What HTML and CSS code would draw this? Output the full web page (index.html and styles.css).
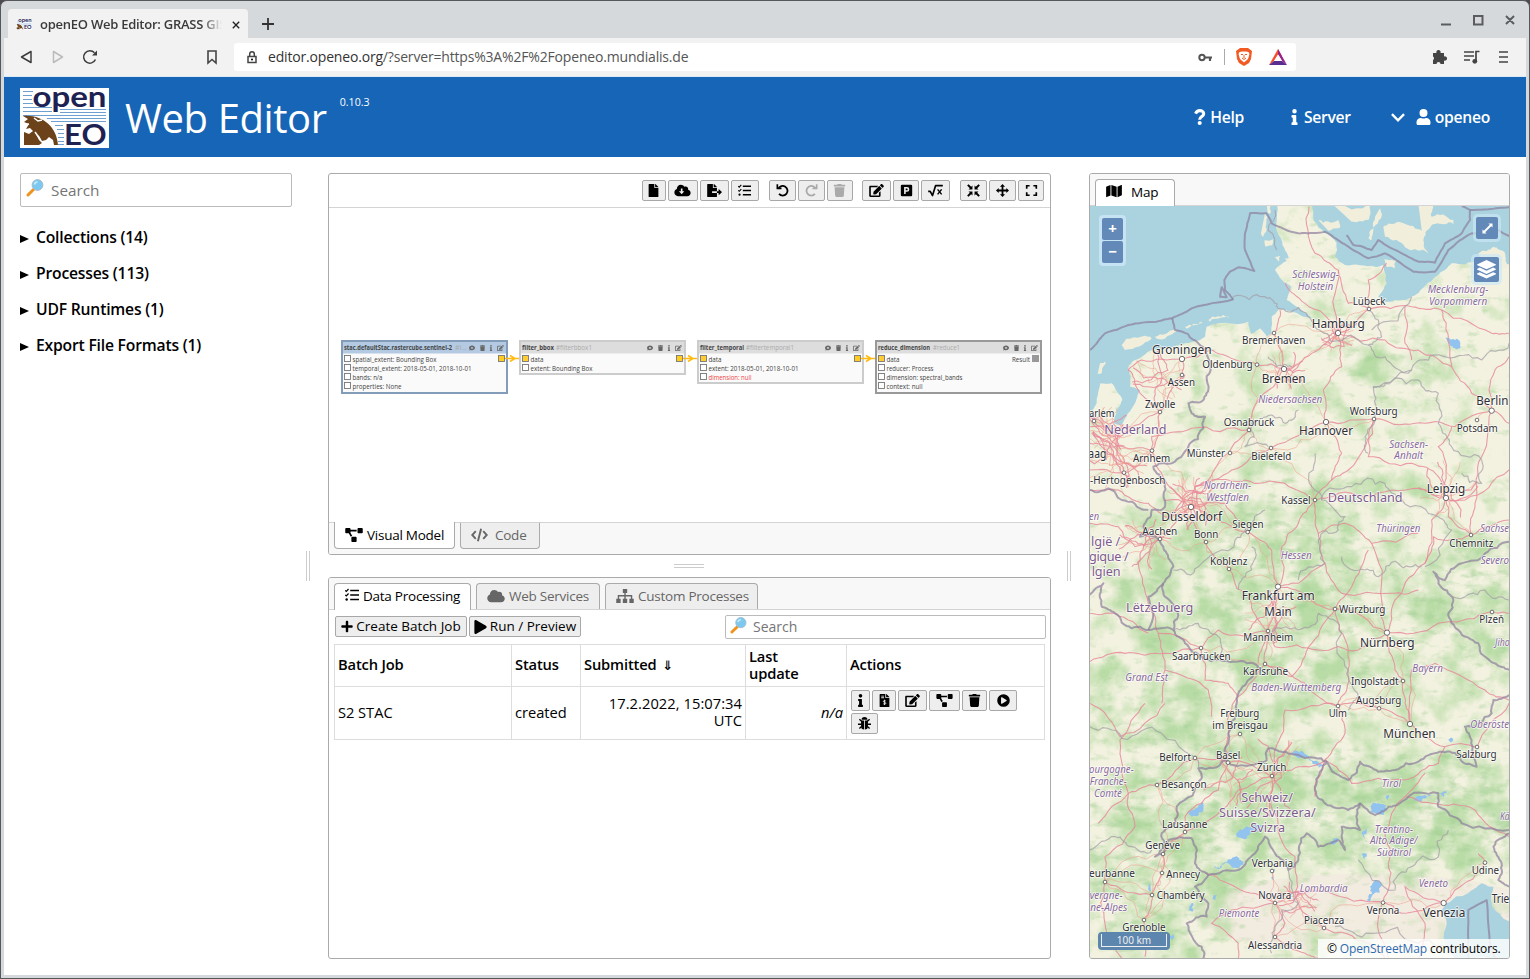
FILE: index.html
```
<!DOCTYPE html>
<html lang="en">
<head>
<meta charset="utf-8">
<title>openEO Web Editor</title>
<link rel="stylesheet" href="styles.css">
</head>
<body>
<svg class="sprite" aria-hidden="true">
  <symbol id="file" viewBox="0 0 384 512"><path d="M224 136V0H24C10.700 0 0 10.700 0 24v464c0 13.300 10.700 24 24 24h336c13.300 0 24-10.700 24-24V160H248c-13.200 0-24-10.800-24-24zm160-14.100v6.100H256V0h6.100c6.400 0 12.500 2.500 17 7l97.900 98c4.500 4.500 7 10.600 7 16.900z"/></symbol>
  <symbol id="cloud" viewBox="0 0 640 512"><path d="M537.600 226.600c4.100-10.700 6.400-22.400 6.400-34.600 0-53-43-96-96-96-19.700 0-38.100 6-53.300 16.200C367 64.200 315.300 32 256 32c-88.400 0-160 71.600-160 160 0 2.700.1 5.400.2 8.100C40.200 219.800 0 273.200 0 336c0 79.500 64.500 144 144 144h368c70.700 0 128-57.300 128-128 0-61.900-44-113.600-102.400-125.400z"/></symbol>
  <symbol id="cloud-down" viewBox="0 0 640 512"><path fill-rule="evenodd" d="M537.600 226.600c4.100-10.700 6.400-22.400 6.400-34.600 0-53-43-96-96-96-19.700 0-38.100 6-53.300 16.200C367 64.200 315.300 32 256 32c-88.400 0-160 71.600-160 160 0 2.700.1 5.400.2 8.100C40.200 219.800 0 273.200 0 336c0 79.500 64.500 144 144 144h368c70.700 0 128-57.300 128-128 0-61.900-44-113.600-102.400-125.400zM255 176h66v112h70L288 400 180 288h75z"/></symbol>
  <symbol id="export" viewBox="0 0 576 512"><path d="M384 122v6H256V0h6c6 0 12 3 17 7l98 98c4 4 7 11 7 17zM224 136V0H24C11 0 0 11 0 24v464c0 13 11 24 24 24h336c13 0 24-11 24-24V352H192v-64h192V160H248c-13 0-24-11-24-24zM571 308l-96-96c-10-10-27-3-27 11v65H384v64h64v65c0 14 17 21 27 11l96-97c6-6 6-17 0-23z"/></symbol>
  <symbol id="tasks" viewBox="0 0 512 512"><path fill="none" stroke="currentColor" stroke-width="54" d="M190 90h322M190 256h322M190 422h322"/><path fill="none" stroke="currentColor" stroke-width="44" d="M10 85l38 38L130 36M10 250l38 38 82-87"/><circle cx="60" cy="422" r="44"/></symbol>
  <symbol id="undo" viewBox="0 0 512 512"><path fill="none" stroke="currentColor" stroke-width="72" d="M90 190a190 190 0 1 1 30 200"/><path d="M20 10h66v130h130v66H20z"/></symbol>
  <symbol id="redo" viewBox="0 0 512 512"><path fill="none" stroke="currentColor" stroke-width="72" d="M422 190a190 190 0 1 0-30 200"/><path d="M492 10h-66v130H296v66h196z"/></symbol>
  <symbol id="trash" viewBox="0 0 448 512"><path d="M432 32H312l-9.400-18.700A24 24 0 0 0 281.100 0H166.800a23.700 23.700 0 0 0-21.400 13.300L136 32H16A16 16 0 0 0 0 48v32a16 16 0 0 0 16 16h416a16 16 0 0 0 16-16V48a16 16 0 0 0-16-16zM32 128l21.200 339a48 48 0 0 0 47.900 45h245.800a48 48 0 0 0 47.900-45L416 128z"/></symbol>
  <symbol id="edit" viewBox="0 0 576 512"><path d="M402.600 83.200l90.200 90.200c3.800 3.800 3.800 10 0 13.800L274.400 405.600l-92.800 10.300c-12.400 1.400-22.900-9.100-21.500-21.500l10.300-92.800L388.800 83.200c3.800-3.800 10-3.800 13.800 0zm162-22.900l-48.800-48.800c-15.200-15.200-39.900-15.200-55.200 0l-35.400 35.400c-3.800 3.800-3.800 10 0 13.800l90.200 90.200c3.800 3.800 10 3.800 13.800 0l35.400-35.400c15.200-15.300 15.200-40 0-55.200zM384 346.200V448H64V128h229.800c3.200 0 6.200-1.300 8.500-3.500l40-40c7.600-7.600 2.200-20.500-8.500-20.500H48C21.500 64 0 85.500 0 112v352c0 26.500 21.500 48 48 48h352c26.500 0 48-21.500 48-48V306.200c0-10.700-12.900-16-20.500-8.500l-40 40c-2.200 2.300-3.500 5.300-3.500 8.500z"/></symbol>
  <symbol id="param" viewBox="0 0 448 512"><path fill-rule="evenodd" d="M48 32h352a48 48 0 0 1 48 48v352a48 48 0 0 1-48 48H48a48 48 0 0 1-48-48V80a48 48 0 0 1 48-48zM130 120v272h62v-84h50a94 94 0 0 0 0-188zm62 60h44a34 34 0 0 1 0 68h-44z"/></symbol>
  <symbol id="root" viewBox="0 0 576 512"><path fill="none" stroke="currentColor" stroke-width="66" stroke-linejoin="round" d="M0 290h80l90 165L290 65h286"/><path fill="none" stroke="currentColor" stroke-width="56" d="M370 210l160 200M530 210L370 410"/></symbol>
  <symbol id="compress" viewBox="0 0 512 512"><path d="M215 215H60l50-50L5 60 60 5l105 105 50-50zM297 215V60l50 50L452 5l55 55-105 105 50 50zM297 297h155l-50 50 105 105-55 55-105-105-50 50zM215 297v155l-50-50L60 507 5 452l105-105-50-50z"/></symbol>
  <symbol id="move" viewBox="0 0 512 512"><path d="M256 0l100 105h-65v116h116v-65l105 100-105 100v-65H291v116h65L256 512 156 407h65V291H105v65L0 256l105-100v65h116V105h-65z"/></symbol>
  <symbol id="expand" viewBox="0 0 448 512"><path fill="none" stroke="currentColor" stroke-width="66" d="M35 190V68h115M298 68h115v122M413 322v122H298M150 444H35V322"/></symbol>
  <symbol id="model" viewBox="0 0 640 512"><path d="M384 320H256c-17.670 0-32 14.330-32 32v128c0 17.670 14.330 32 32 32h128c17.670 0 32-14.330 32-32V352c0-17.670-14.330-32-32-32zM192 32c0-17.670-14.330-32-32-32H32C14.330 0 0 14.330 0 32v128c0 17.670 14.330 32 32 32h95.720l73.160 128.040C211.980 300.980 232.400 288 256 288h.28L192 175.510V128h224V64H192V32zM608 0H480c-17.670 0-32 14.330-32 32v128c0 17.670 14.330 32 32 32h128c17.670 0 32-14.330 32-32V32c0-17.670-14.330-32-32-32z"/></symbol>
  <symbol id="code" viewBox="0 0 640 512"><path fill="none" stroke="currentColor" stroke-width="72" d="M180 110L45 256l135 146M460 110l135 146-135 146M380 20L260 492"/></symbol>
  <symbol id="sitemap" viewBox="0 0 640 512"><path d="M240 0h160v144H240zM0 352h160v160H0zM240 352h160v160H240zM480 352h160v160H480z"/><path fill="none" stroke="currentColor" stroke-width="50" d="M320 110v260M80 370V246h480v124"/></symbol>
  <symbol id="plus" viewBox="0 0 448 512"><path d="M416 208H272V64c0-17.670-14.330-32-32-32h-32c-17.670 0-32 14.330-32 32v144H32c-17.670 0-32 14.330-32 32v32c0 17.670 14.330 32 32 32h144v144c0 17.670 14.330 32 32 32h32c17.670 0 32-14.330 32-32V304h144c17.670 0 32-14.330 32-32v-32c0-17.670-14.330-32-32-32z"/></symbol>
  <symbol id="play" viewBox="0 0 448 512"><path d="M424.400 214.700L72.400 6.600C43.800-10.300 0 6.100 0 47.900V464c0 37.500 40.700 60.100 72.400 41.300l352-208c31.400-18.500 31.500-64.100 0-82.600z"/></symbol>
  <symbol id="info" viewBox="0 0 192 512"><path d="M20 424.200h20V279.800H20c-11 0-20-9-20-20V212c0-11 9-20 20-20h112c11 0 20 9 20 20v212.200h20c11 0 20 9 20 20V492c0 11-9 20-20 20H20c-11 0-20-9-20-20v-47.800c0-11 9-20 20-20zM96 0a72 72 0 1 0 0 144A72 72 0 0 0 96 0z"/></symbol>
  <symbol id="invoice" viewBox="0 0 384 512"><path fill-rule="evenodd" d="M224 136V0H24C11 0 0 11 0 24v464c0 13 11 24 24 24h336c13 0 24-11 24-24V160H248c-13 0-24-11-24-24zM64 64h110v34H64zM64 130h110v34H64zM256 0v128h128v-6c0-6-3-13-7-17L279 7c-5-4-11-7-17-7z"/><path fill="none" stroke="#eee" stroke-width="34" d="M240 275c-30-22-92-20-92 18 0 46 96 24 96 74 0 40-70 42-100 16M193 225v210"/></symbol>
  <symbol id="run" viewBox="0 0 512 512"><path fill-rule="evenodd" d="M256 8a248 248 0 1 0 0 496 248 248 0 0 0 0-496zm115.700 272l-176 101c-15.800 8.800-35.700-2.500-35.700-21V152c0-18.400 19.800-29.800 35.700-21l176 107c16.400 9.200 16.400 32.900 0 42z"/></symbol>
  <symbol id="bug" viewBox="0 0 512 512"><path d="M140 110a116 106 0 0 1 232 0zM120 140h120v350a120 120 0 0 1-120-120zM272 140h120v230a120 120 0 0 1-120 120z"/><path fill="none" stroke="currentColor" stroke-width="52" d="M150 180L55 90M362 180l95-90M0 285h130M382 285h130M140 370L55 455M372 370l85 85"/></symbol>
  <symbol id="user" viewBox="0 0 448 512"><path d="M224 256a128 128 0 1 0 0-256 128 128 0 0 0 0 256zm89.600 32h-16.700a174 174 0 0 1-145.800 0h-16.700C60.200 288 0 348.200 0 422.400V464c0 26.500 21.500 48 48 48h352c26.500 0 48-21.500 48-48v-41.600c0-74.200-60.200-134.400-134.400-134.400z"/></symbol>
  <symbol id="question" viewBox="0 0 384 512"><path fill="none" stroke="currentColor" stroke-width="98" d="M50 150c30-70 75-98 133-98 70 0 128 40 128 96 0 96-132 86-132 196"/><circle cx="182" cy="446" r="66"/></symbol>
  <symbol id="chevron" viewBox="0 0 448 512"><path fill="none" stroke="currentColor" stroke-width="76" d="M30 165l194 194 194-194"/></symbol>
  <symbol id="map" viewBox="0 0 576 512"><path d="M0 117.700V464c0 11.300 11.400 19 21.900 14.900L160 416V32L20.100 88A32 32 0 0 0 0 117.700zM192 416l192 64V96L192 32v384zM554 33.200L416 96v384l139.900-56a32 32 0 0 0 20.100-29.700V48c0-11.300-11.400-19-22-14.800z"/></symbol>
  <symbol id="layers" viewBox="0 0 512 512"><path d="M256 0l244 112q24 15 0 30L256 252 12 142q-24-15 0-30zM75 205l181 82 181-82 63 29q24 15 0 30L256 374 12 264q-24-15 0-30zM75 330l181 82 181-82 63 29q24 15 0 30L256 500 12 389q-24-15 0-30z"/></symbol>
  <symbol id="comment" viewBox="0 0 512 512"><path fill-rule="evenodd" d="M256 40C115 40 0 130 0 245c0 50 22 95 58 130-15 50-55 92-56 93 60 3 110-25 140-45 35 14 73 22 114 22 141 0 256-90 256-200S397 40 256 40zM215 160h82v60h60v60h-60v60h-82v-60h-60v-60h60z"/></symbol>
  <symbol id="lens" viewBox="0 0 18 18"><path stroke="#f0931e" stroke-width="3" stroke-linecap="round" d="M2 16l5.500-5.500"/><circle cx="11.500" cy="6" r="5.400" fill="#7cc8f0" stroke="#a3bccb" stroke-width="1"/><path fill="none" stroke="#c9ebfb" stroke-width="1.600" d="M8.500 5.500a3 3 0 0 1 3-2.500"/></symbol>
  <symbol id="logo" viewBox="0 0 89 60"><path fill="#fff" d="M0 0h89v60H0z"/><path fill="none" stroke="#6d9fd1" stroke-width="1" d="M3 3.500h10M3 7.500h9M3 11.500h9M3 15.500h10M3 19.500h29M3 23.500h29M40 21.500h46M40 24.500h46M3 27.500h83M27 30.500h59M31 33.500h55M35 37.500h8M37 41.500h7M38 45.500h6M38 49.500h6M38 53.500h6M38 56.500h6"/><path fill="#6b4219" d="M3 28c19-2 34 11 35 29h-4l-1-5-4-3-3 3-4 1-3-5-3-2 3 6 3 3-3 2H4V44l5 2 4-3-3-3-4 1 3-5-5-2 4-3z"/><path fill="none" stroke="#fff" stroke-width="1.500" d="M4 37l5-1M14 30l4 3 4-1M15 44l5 7"/><g fill="#1d2252" font-family="Lato" font-weight="700"><text x="12.500" y="18.500" font-size="28" textLength="74" lengthAdjust="spacingAndGlyphs">open</text><text x="44" y="56.500" font-size="28.500" textLength="42.500" lengthAdjust="spacingAndGlyphs">EO</text></g></symbol>
</svg>

<div class="window">
  <header class="titlebar">
    <div class="browser-tab"><svg class="favicon"><use href="#logo"/></svg><span class="tab-title">openEO Web Editor: GRASS GIS</span><svg class="tab-close" viewBox="0 0 10 10"><path d="M1 1l8 8M9 1L1 9"/></svg></div>
    <svg class="new-tab" viewBox="0 0 12 12"><path d="M6 0v12M0 6h12"/></svg>
    <svg class="win-buttons" viewBox="0 0 76 14"><path d="M1 11.500h10M34 3h8.500v8.500H34zM66 3l8 8M74 3l-8 8"/></svg>
  </header>
  <nav class="browser-bar">
    <svg class="nav-icons" viewBox="0 0 90 18"><path d="M12 3.500v11L2.500 9z"/><path class="dim" d="M34.500 3.500v11L43.500 9z"/><path d="M75.500 4.800A6.200 6.200 0 1 0 76.500 11.500"/><path class="solid" d="M78 2.500v5h-5z"/></svg>
    <svg class="bookmark" viewBox="0 0 10 14"><path d="M1 1h8v12L5 9.500 1 13z"/></svg>
    <div class="address">
      <svg class="lock" viewBox="0 0 10 13"><path fill="none" stroke="#444" stroke-width="1.500" d="M1 5.500h8v6H1zM2.700 5V3a2.300 2.300 0 0 1 4.600 0v2"/><circle cx="5" cy="8.500" r="1"/></svg>
      <span class="url"><b>editor.openeo.org</b>/?server=https%3A%2F%2Fopeneo.mundialis.de</span>
      <svg class="key" viewBox="0 0 15 9"><circle cx="4" cy="4.500" r="2.700" fill="none" stroke="#555" stroke-width="2"/><path stroke="#555" stroke-width="2.200" d="M6.500 4.500H14M12 5v3"/></svg>
      <i class="rule"></i>
      <svg class="brave" viewBox="0 0 16 18"><path fill="#f15a22" d="M4 0h8l4 3-1 8-2 4-5 3-5-3-2-4-1-8z"/><path fill="#fff" d="M3.500 4L6 3.500h4l2.500.5 1 2-1.500 5-4 3.500L4 11 2.500 6z"/><path fill="none" stroke="#f15a22" d="M5 6.500h2M9 6.500h2M8 7v3M6 10l2 1.500 2-1.500"/></svg>
      <svg class="bat" viewBox="0 0 18 16"><path fill="#f4512c" d="M9 0l4 7-4-1-4 6-5 4z"/><path fill="#96228a" d="M9 0l9 16-5-4-4-7z"/><path fill="#5a2d91" d="M0 16l5-4h8l5 4z"/><path fill="#fff" d="M9 5.500l4 6.500H5z"/></svg>
    </div>
    <svg class="ext-icons" viewBox="0 0 78 18"><path fill="#444" d="M1 5h3.500a2.200 2.200 0 1 1 4 0H12v3.500a2.200 2.200 0 1 1 0 4V16H8.500a2 2 0 0 0-4 0H1v-4a2 2 0 0 0 0-3.500z"/><path fill="none" stroke="#444" stroke-width="1.700" d="M32 4h10M32 8h10M32 12h6M44 13V3.500h3.500"/><circle cx="42.800" cy="13.300" r="2.400" fill="#444"/><path stroke="#444" stroke-width="1.700" d="M67 4h9M67 9h9M67 14h9"/></svg>
  </nav>

  <header class="app-header">
    <svg class="logo"><use href="#logo"/></svg>
    <h1>Web Editor</h1><sup>0.10.3</sup>
    <div class="menu">
      <a><svg class="i12"><use href="#question"/></svg>Help</a>
      <a class="m-server"><svg class="i6"><use href="#info"/></svg>Server</a>
      <a class="m-user"><svg class="i14"><use href="#chevron"/></svg><svg class="i15"><use href="#user"/></svg>openeo</a>
    </div>
  </header>

  <main>
    <aside class="discovery">
      <div class="search big"><svg class="lens"><use href="#lens"/></svg>Search</div>
      <div class="entry">Collections (14)</div>
      <div class="entry">Processes (113)</div>
      <div class="entry">UDF Runtimes (1)</div>
      <div class="entry">Export File Formats (1)</div>
    </aside>
    <div class="splitter"><i></i></div>
    <div class="center">
      <section class="panel editor">
        <div class="tools">
          <div><button class="w24"><svg><use href="#file"/></svg></button><button class="w30"><svg><use href="#cloud-down"/></svg></button><button class="w29"><svg><use href="#export"/></svg></button><button class="w28"><svg><use href="#tasks"/></svg></button></div>
          <div><button class="w27"><svg><use href="#undo"/></svg></button><button class="w27 off"><svg><use href="#redo"/></svg></button><button class="w26 off"><svg><use href="#trash"/></svg></button></div>
          <div><button class="w29"><svg><use href="#edit"/></svg></button><button class="w26"><svg><use href="#param"/></svg></button><button class="w29"><svg><use href="#root"/></svg></button></div>
          <div><button class="w27"><svg><use href="#compress"/></svg></button><button class="w27"><svg><use href="#move"/></svg></button><button class="w26"><svg><use href="#expand"/></svg></button></div>
        </div>
        <svg class="graph" id="graph" viewBox="329 208 721 313"></svg>
        <div class="tabs bottom">
          <span class="tab active t-model"><svg class="i18"><use href="#model"/></svg>Visual Model</span><span class="tab t-code"><svg class="i17"><use href="#code"/></svg>Code</span>
        </div>
      </section>
      <div class="hsplitter"><i></i></div>
      <section class="panel jobs">
        <div class="tabs top">
          <span class="tab active t-data"><svg class="i14"><use href="#tasks"/></svg>Data Processing</span><span class="tab t-web"><svg class="i18"><use href="#cloud"/></svg>Web Services</span><span class="tab t-custom"><svg class="i18"><use href="#sitemap"/></svg>Custom Processes</span>
        </div>
        <div class="job-actions">
          <button class="text b-create"><svg class="i12"><use href="#plus"/></svg>Create Batch Job</button><button class="text b-run"><svg class="i13"><use href="#play"/></svg>Run / Preview</button>
          <div class="search small"><svg class="lens"><use href="#lens"/></svg>Search</div>
        </div>
        <table>
          <tr><th class="c1">Batch Job</th><th class="c2">Status</th><th class="c3">Submitted <span class="sort">⇓</span></th><th class="c4">Last<br>update</th><th class="c5">Actions</th></tr>
          <tr><td>S2 STAC</td><td>created</td><td class="r">17.2.2022, 15:07:34 UTC</td><td class="r"><em>n/a</em></td>
          <td class="acts"><div><button class="w20"><svg><use href="#info"/></svg></button><button class="w24"><svg><use href="#invoice"/></svg></button><button class="w29"><svg><use href="#edit"/></svg></button><button class="w31"><svg><use href="#model"/></svg></button><button class="w25"><svg><use href="#trash"/></svg></button><button class="w28"><svg><use href="#run"/></svg></button><button class="w27"><svg><use href="#bug"/></svg></button></div></td></tr>
        </table>
      </section>
    </div>
    <div class="splitter second"><i></i></div>
    <section class="panel viewer">
      <div class="tabs top"><span class="tab active t-map"><svg class="i16"><use href="#map"/></svg>Map</span></div>
      <div class="map">
        <svg id="map-svg" viewBox="15 108 1257 2256" preserveAspectRatio="none">
          <defs>
            <filter id="wood" x="0" y="0" width="1" height="1" color-interpolation-filters="sRGB"><feTurbulence type="fractalNoise" baseFrequency=".011" numOctaves="6" seed="8"/><feColorMatrix values="0 0 0 0 0  0 0 0 0 0  0 0 0 0 0  1 0 0 0 0" result="n"/><feComposite in="n" in2="SourceAlpha" operator="arithmetic" k2="2.600" k3=".8" k4="-1.500" result="m"/><feFlood flood-color="#b9dca6"/><feComposite in2="m" operator="in"/></filter>
            <filter id="relief" x="0" y="0" width="1" height="1" color-interpolation-filters="sRGB"><feTurbulence type="fractalNoise" baseFrequency=".022 .04" numOctaves="5" seed="3"/><feColorMatrix values="0 0 0 0 0  0 0 0 0 0  0 0 0 0 0  0 1 0 0 0" result="n"/><feComposite in="n" in2="SourceAlpha" operator="arithmetic" k2="3" k3=".6" k4="-1.850" result="m"/><feFlood flood-color="#9fce92"/><feComposite in2="m" operator="in"/></filter>
            <radialGradient id="g"><stop offset="0" stop-color="#000"/><stop offset=".6" stop-color="#000" stop-opacity=".7"/><stop offset="1" stop-color="#000" stop-opacity="0"/></radialGradient>
          </defs>
          <rect x="15" y="108" width="1257" height="2256" fill="#f3f2e0"/>
          <ellipse cx="850" cy="2230" rx="520" ry="120" fill="#f2ebdf"/>
          <g filter="url(#wood)"><rect x="15" y="108" width="1257" height="2256" fill="none"/><g id="density" fill="url(#g)"></g></g>
          <g filter="url(#relief)" opacity=".55"><rect x="15" y="108" width="1257" height="2256" fill="none"/><g id="hills" fill="url(#g)"></g></g>
          <g id="water"></g><g id="roads"></g><g id="borders"></g><g id="labels"></g>
        </svg>
        <div class="zoom"><b>+</b><b>−</b></div>
        <div class="ctl full"><svg viewBox="0 0 12 12"><path d="M7 .5h4.500V5L10 3.500 3.500 10 5 11.500H.5V7L2 8.500 8.500 2z"/></svg></div>
        <div class="ctl layer"><svg><use href="#layers"/></svg></div>
        <div class="scale"><span>100 km</span></div>
        <div class="attribution">© <a>OpenStreetMap</a> contributors.</div>
      </div>
    </section>
  </main>
</div>
<script src="map.js"></script>
</body>
</html>
```
FILE: styles.css
```
* { box-sizing: border-box; }
body { margin: 0; font: 15px/17px "Open Sans", "Noto Sans", sans-serif; color: #000; background: #4b4b50; }
svg { fill: currentColor; overflow: visible; flex: none; }
.sprite { position: absolute; width: 0; height: 0; overflow: hidden; }
.window { width: 1530px; height: 979px; border: 1px solid #55575b; border-radius: 7px 7px 0 0; background: #d6d9dc; padding: 0 3px 3px; display: grid; grid-template-rows: 37px 39px 80px 1fr; overflow: hidden; }

.titlebar { display: flex; align-items: flex-start; }
.browser-tab { margin: 8px 0 0 4px; width: 240px; height: 29px; background: #f2f2f2; border-radius: 4px 4px 0 0; display: flex; align-items: center; padding: 2px 8px 0; }
.favicon { width: 16px; height: 15px; margin-right: 8px; }
.tab-title { width: 182px; overflow: hidden; white-space: nowrap; font-size: 13px; font-weight: 600; letter-spacing: -.25px; color: #3a3a3a; -webkit-mask-image: linear-gradient(90deg, #000 162px, transparent 182px); mask-image: linear-gradient(90deg, #000 162px, transparent 182px); }
.tab-close { width: 8px; height: 8px; margin-left: 10px; fill: none; stroke: #222; stroke-width: 1.7; }
.new-tab { width: 12px; height: 12px; margin: 17px 0 0 14px; fill: none; stroke: #333; stroke-width: 1.8; }
.win-buttons { width: 76px; height: 14px; margin: 12px 10px 0 auto; fill: none; stroke: #5a5c5e; stroke-width: 2; }

.browser-bar { background: #f2f2f2; display: flex; align-items: center; border-bottom: 1px solid #dcecf5; padding-left: 15px; }
.nav-icons { width: 90px; height: 18px; fill: none; stroke: #3c3c3c; stroke-width: 1.5; stroke-linejoin: round; }
.nav-icons .dim { stroke: #bbb; }
.nav-icons .solid { fill: #3c3c3c; stroke: none; }
.bookmark { width: 10px; height: 14px; margin-left: 98px; fill: none; stroke: #444; stroke-width: 1.6; }
.address { margin-left: 17px; width: 1062px; height: 28px; border-radius: 3px; background: #fff; display: flex; align-items: center; padding: 0 9px 0 13px; }
.lock { width: 10px; height: 13px; }
.url { margin: -2px 0 0 11px; font-size: 14px; letter-spacing: -.18px; color: #555; }
.url b { font-weight: 400; color: #333; }
.key { width: 15px; height: 9px; margin-left: auto; }
.rule { width: 1px; height: 16px; background: #aaa; margin: 0 11px 0 11px; }
.brave { width: 16px; height: 18px; }
.bat { width: 18px; height: 16px; margin-left: 17px; }
.ext-icons { width: 78px; height: 18px; margin-left: 136px; }

.app-header { background: #1665b6; color: #fff; display: flex; padding: 0 36px 0 16px; }
.logo { width: 89px; height: 60px; margin-top: 11px; }
h1 { margin: 14px 0 0 16px; font-size: 40px; line-height: 54px; font-weight: 400; letter-spacing: -.4px; white-space: nowrap; }
sup { font-size: 10.600px; line-height: 14px; margin: 18px 0 0 13px; }
.menu { margin-left: auto; display: flex; align-items: center; font-size: 15.700px; font-weight: 600; letter-spacing: -.3px; }
.menu a { display: flex; align-items: center; }
.menu svg { height: 16px; margin-right: 4px; }
.m-server { margin-left: 47px; }
.menu .i6 { width: 7px; margin-right: 6px; }
.m-user { margin-left: 40px; }
.menu .i14 { margin-right: 11px; }
.i12 { width: 12px; } .i13 { width: 13px; } .i14 { width: 14px; } .i15 { width: 15px; } .i16 { width: 16px; } .i17 { width: 17px; } .i18 { width: 18px; }

main { background: #fff; padding: 16px 16px 16px; display: grid; grid-template-columns: 272px 36px 723px 38px 421px; min-height: 0; }
.search { border: 1px solid #bbb; border-radius: 2px; background: #fff; color: #757575; display: flex; }
.search.big { height: 34px; font-size: 15.300px; line-height: 33px; padding-left: 5px; margin-bottom: 18px; }
.lens { width: 18px; height: 18px; margin: 5px 7px 0 0; }
.entry { height: 36px; line-height: 25px; font-weight: 600; font-size: 15.700px; letter-spacing: -.2px; display: flex; align-items: flex-start; }
.entry::before { content: ""; border: 4.500px solid transparent; border-left: 9px solid #000; border-right: 0; margin: 10px 7px 0 0; }
.splitter { display: flex; align-items: center; padding-left: 14px; }
.splitter.second { padding-left: 16px; }
.splitter i { width: 4px; height: 30px; border: solid #ccc; border-width: 0 1px; }
.center { display: grid; grid-template-rows: 382px 22px 382px; }
.hsplitter { padding: 9px 0 0 346px; }
.hsplitter i { display: block; width: 30px; height: 4px; border: solid #ccc; border-width: 1px 0; }
.panel { border: 1px solid #aaa; border-radius: 3px; overflow: hidden; min-width: 0; }
.editor { display: grid; grid-template-rows: 34px 314px 32px; }
.tools { display: flex; justify-content: flex-end; gap: 9.700px; padding: 6px 6px 0 0; border-bottom: 1px solid #d4d4d4; }
.tools div { display: flex; gap: 2px; }
button { height: 21px; padding: 0; border: 1px solid #a8a8a8; border-radius: 2px; background: #eee; color: #000; font: inherit; display: flex; align-items: center; justify-content: center; }
button svg { height: 13px; width: 17px; }
.off { color: #aaa; }
.w20 { width: 19px; } .w24 { width: 24px; } .w25 { width: 25px; } .w26 { width: 26px; } .w27 { width: 27px; } .w28 { width: 28px; } .w29 { width: 29px; } .w30 { width: 30px; } .w31 { width: 31px; }
.graph { width: 721px; height: 313px; display: block; }
.graph text { font-size: 6.200px; fill: #444; }
.tabs { background: #f8f8f8; padding: 0 5px; display: flex; gap: 5px; font-size: 13.500px; letter-spacing: -.25px; }
.tab { border: 1px solid #aaa; background: #eee; color: #666; display: flex; align-items: center; padding-left: 10px; white-space: nowrap; }
.tab svg { height: 14px; margin-right: 4px; }
.tab.active { background: #fff; color: #000; }
.bottom { border-top: 1px solid #d4d4d4; height: 32px; }
.bottom .tab { height: 26px; border-top: 0; border-radius: 0 0 4px 4px; }
.bottom .active { margin-top: -1px; height: 27px; padding-top: 1px; }
.bottom svg { margin-top: -2px; }
.t-model { width: 121px; } .t-code { width: 80px; }
.t-code .i17 { margin-right: 7px; }
.top { padding-top: 5px; height: 32px; border-bottom: 1px solid #d4d4d4; }
.top .tab { height: 26px; border-bottom: 0; border-radius: 4px 4px 0 0; }
.top .active { height: 27px; padding-bottom: 2px; }
.top svg { margin-top: -2px; }
.t-data { width: 137px; } .t-web { width: 124px; } .t-custom { width: 153px; } .t-map { width: 80px; }
.t-map .i16 { margin-right: 9px; }
.job-actions { display: flex; padding: 5px 4px 0 6px; height: 34px; font-size: 13.500px; letter-spacing: -.1px; }
.text { margin-top: 1px; margin-right: 2px; white-space: nowrap; }
.text svg { margin-right: 3px; }
.text svg.i12 { width: 12px; } .text svg.i13 { width: 13px; height: 14px; }
.b-create { width: 132px; } .b-run { width: 112px; }
.search.small { width: 321px; height: 24px; margin-left: auto; font-size: 14px; line-height: 22px; padding-left: 4px; letter-spacing: 0; }
.small .lens { width: 17px; height: 17px; margin: 1px 6px 0 0; }
table { border-collapse: collapse; table-layout: fixed; width: 711px; margin: 0 0 0 5px; font-size: 14.700px; letter-spacing: -.05px; }
th, td { border: 1px solid #ddd; text-align: left; padding: 0 3px 2px; }
th { font-weight: 600; height: 42px; letter-spacing: -.15px; }
td { height: 53px; }
.sort { margin-left: 2px; font-family: "DejaVu Sans"; font-size: 13px; line-height: 1; }
.c1 { width: 177px; } .c2 { width: 69px; } .c3 { width: 165px; } .c4 { width: 101px; } .c5 { width: 198px; }
td.r { text-align: right; letter-spacing: .05px; }
.acts div { display: flex; flex-wrap: wrap; gap: 2px; width: 172px; margin-left: 1px; }

.viewer { display: grid; grid-template-rows: 32px 1fr; }
.map { position: relative; overflow: hidden; background: #aad3df; font-family: "Noto Sans", sans-serif; }
.map > svg { display: block; width: 419px; height: 752px; overflow: hidden; }
.zoom { position: absolute; left: 9px; top: 9px; padding: 3px; background: #c5e3f3; border-radius: 4px; width: 27px; display: grid; gap: 1px; }
.zoom b { height: 22px; background: #6389b8; color: #fff; text-align: center; font-size: 15px; line-height: 21px; border-radius: 2px; }
.ctl { position: absolute; display: grid; place-items: center; background: #6389b8; color: #fff; box-shadow: 0 0 0 3px #cbe7f6aa; border-radius: 2px; }
.full { right: 11px; top: 11px; width: 22px; height: 22px; }
.full svg { width: 11px; height: 11px; }
.layer { right: 10px; top: 51px; width: 25px; height: 25px; }
.layer svg { width: 19px; height: 19px; }
.scale { position: absolute; left: 8px; bottom: 8px; width: 72px; height: 18px; padding: 2px; background: #5d86ae; border-radius: 4px; }
.scale span { display: block; height: 13px; margin: 0 1px; border: 1px solid #eee; border-top: 0; color: #eee; text-align: center; font-size: 10px; line-height: 13px; }
.attribution { position: absolute; right: 0; bottom: 0; width: 191px; height: 19px; background: #ffffffd0; font: 12px/19px "Open Sans", sans-serif; letter-spacing: -.15px; padding-left: 9px; white-space: nowrap; }
.attribution a { color: #2f6aaf; }
#labels text { paint-order: stroke; stroke: #fffc; stroke-width: 5px; stroke-linejoin: round; fill: #2f2f33; }
#labels .L { font-size: 39px; } #labels .s { font-size: 32px; }
#labels .c { font-size: 38px; fill: #7f5a8d; }
#labels .r { font-size: 31px; fill: #8a6b9c; font-style: italic; text-align: left; }
#labels circle { fill: #fff; stroke: #555; stroke-width: 2.500; }
#roads path { fill: none; stroke: #e8899b; stroke-width: 3.200; opacity: .85; }
#roads .minor { stroke: #eea495; stroke-width: 2.300; opacity: .75; }
#borders path { fill: none; stroke: #8d7d9c; stroke-width: 6; opacity: .7; stroke-linejoin: round; }
#borders .state { stroke: #a29ba6; stroke-width: 3.500; }
#water .sea { fill: #aad3df; } #water .isle { fill: #f1efdc; } #water .lake { fill: #91c3ee; }
```
FILE: map.js
```
const NS = 'http://www.w3.org/2000/svg';
function add(parent, tag, attrs, text) {
  const el = document.createElementNS(NS, tag);
  for (const k in attrs) el.setAttribute(k, attrs[k]);
  if (text) el.textContent = text;
  parent.appendChild(el);
  return el;
}
const $ = id => document.getElementById(id);
let seed = 11;
const rnd = () => ((seed = (seed * 16807) % 2147483647) / 2147483647);

/* Process graph */
const graph = $('graph');
const nodes = [
  { x: 341, h: 53, name: 'stac.defaultStac.rastercube.sentinel-2', nw: 108, id: '#l…', ix: 455, iw: 12, head: '#b3cae2', line: '#839db9', out: true,
    rows: [['spatial_extent: Bounding Box', 84], ['temporal_extent: 2018-05-01, 2018-10-01', 119], ['bands: n/a', 30], ['properties: None', 49]] },
  { x: 519, h: 34, name: 'filter_bbox', nw: 32, id: '#filterbbox1', ix: 556, iw: 36, head: '#ddd', line: '#ccc', out: true,
    rows: [['data', 13, 1], ['extent: Bounding Box', 62]] },
  { x: 697, h: 43, name: 'filter_temporal', nw: 44, id: '#filtertemporal1', ix: 746, iw: 48, head: '#ddd', line: '#ccc', out: true,
    rows: [['data', 13, 1], ['extent: 2018-05-01, 2018-10-01', 90], ['dimension: null', 43, 0, 1]] },
  { x: 875, h: 53, name: 'reduce_dimension', nw: 52, id: '#reduce1', ix: 933, iw: 27, head: '#ddd', line: '#999', result: true,
    rows: [['data', 13, 1], ['reducer: Process', 47], ['dimension: spectral_bands', 76], ['context: null', 36]] }
];
for (const n of nodes) {
  const g = add(graph, 'g', {});
  add(g, 'rect', { x: n.x + 1, y: 341, width: 165, height: n.h - 1, fill: '#fafafa' });
  add(g, 'rect', { x: n.x + 1, y: 341, width: 165, height: 12.5, fill: n.head });
  add(g, 'rect', { x: n.x + 1, y: 341, width: 165, height: n.h - 1, fill: 'none', stroke: n.line, 'stroke-width': 2 });
  add(g, 'text', { x: n.x + 3, y: 350, textLength: n.nw, lengthAdjust: 'spacingAndGlyphs', style: 'font-weight:700' }, n.name);
  add(g, 'text', { x: n.ix, y: 350, textLength: n.iw, lengthAdjust: 'spacingAndGlyphs', style: 'fill:#aaa' }, n.id);
  [['comment', 128, 6], ['trash', 138.500, 6], ['info', 147, 6], ['edit', 156, 7]].forEach(([i, dx, w]) =>
    add(g, 'use', { href: '#' + i, x: n.x + dx, y: 345, width: w, height: 6, fill: '#666' }));
  n.rows.forEach(([t, w, fed, bad], i) => {
    const y = 355.500 + i * 9;
    add(g, 'rect', { x: n.x + 3.500, y, width: 6, height: 6, fill: fed ? '#fc3' : '#fff', stroke: '#777', 'stroke-width': .9 });
    add(g, 'text', { x: n.x + 11.500, y: y + 6.800, textLength: w, lengthAdjust: 'spacingAndGlyphs', style: bad ? 'fill:#e44' : '' }, t);
  });
  if (n.out) {
    add(g, 'rect', { x: n.x + 157.500, y: 355.500, width: 6, height: 6, fill: '#fc2', stroke: '#777', 'stroke-width': .9 });
    add(graph, 'path', { d: `M${n.x + 164} 358.500H${n.x + 181}M${n.x + 169} 355.500l5 3-5 3`, fill: 'none', stroke: '#fb1', 'stroke-width': 1.5 });
  }
  if (n.result) {
    add(g, 'rect', { x: n.x + 157, y: 355, width: 7, height: 7, fill: '#999' });
    add(g, 'text', { x: n.x + 137, y: 362.300, textLength: 18, lengthAdjust: 'spacingAndGlyphs' }, 'Result');
  }
}

/* Map. Units are thirds of a pixel. */
const poly = pts => pts.trim().split(' ').map(p => p.split(',').map(Number));
// Fractal subdivision gives coasts, borders and roads their natural wobble.
function rough(pts, amount, depth) {
  for (let d = 0; d < depth; d++) {
    const out = [pts[0]];
    for (let i = 1; i < pts.length; i++) {
      const [a, b] = [pts[i - 1], pts[i]];
      const l = Math.hypot(b[0] - a[0], b[1] - a[1]), o = (rnd() - .5) * amount * l;
      out.push([(a[0] + b[0]) / 2 - (b[1] - a[1]) / (l || 1) * o, (a[1] + b[1]) / 2 + (b[0] - a[0]) / (l || 1) * o], b);
    }
    pts = out;
  }
  return 'M' + pts.map(p => p[0].toFixed(1) + ' ' + p[1].toFixed(1)).join('L');
}

[[640,700,700,300,.25],[900,620,260,200,.5],[1050,560,220,130,.35],[560,1120,480,300,.8],[930,960,160,110,.7],[350,1240,330,260,.8],[760,1330,460,280,.8],[1180,1280,260,300,.9],[560,1600,420,340,.8],[1130,1560,300,240,.6],[180,1660,340,300,.75],[480,1900,520,260,.8],[950,1880,480,200,.95],[250,2120,320,260,.9],[750,2000,520,150,.9],[1150,1960,260,200,1],[200,2320,260,120,.8],[700,2330,200,60,.6],[430,640,180,90,.35],[150,1300,200,220,.7]]
  .forEach(([cx, cy, rx, ry, o]) => add($('density'), 'ellipse', { cx, cy, rx, ry, opacity: o }));
[[750,1900,700,230,.8],[560,1150,420,300,.6],[800,1350,500,250,.5],[1180,1250,240,260,.5],[200,2050,330,330,.8],[300,1650,380,260,.5],[1000,1960,420,220,.9],[880,600,200,200,.3]]
  .forEach(([cx, cy, rx, ry, o]) => add($('hills'), 'ellipse', { cx, cy, rx, ry, opacity: o }));

const water = (cls, s, a = .25) => add($('water'), 'path', { class: cls, d: rough(poly(s), a, 3) + 'Z' });
water('sea', '10,100 575,100 575,180 600,240 612,270 570,300 590,330 618,350 605,390 640,412 680,445 640,432 582,418 560,440 560,490 545,500 525,475 500,492 490,455 400,460 365,470 360,500 345,510 300,520 200,540 150,570 130,590 135,650 165,660 150,700 110,765 85,760 95,720 112,690 80,640 45,640 35,700 10,760', .15);
water('sea', '680,100 685,150 720,190 755,220 750,260 780,285 870,290 895,285 905,340 880,380 900,395 960,390 1000,370 1080,300 1100,280 1180,270 1230,300 1280,280 1280,100', .2);
water('sea', '1085,2200 1150,2170 1190,2140 1225,2150 1220,2200 1250,2240 1280,2260 1280,2370 1110,2370 1075,2300 1085,2260 1070,2220', .2);
['700,150 760,150 765,172 730,182', '740,100 860,100 850,150 800,155', '885,115 888,145 860,210 850,205 870,140', '895,170 930,160 1000,178 1020,185 1030,250 1010,240 960,232 900,200', '1000,100 1050,100 1040,140 1105,150 1105,162 1050,162 1020,200 1010,180', '898,268 935,270 930,295 905,290', '1180,250 1225,230 1260,250 1272,290 1200,290', '540,130 548,140 535,200 528,190', '538,212 565,208 562,225 540,228', '570,262 585,258 582,275', '600,265 615,262 612,285', '110,525 190,500 200,506 120,540', '210,500 270,478 275,484 215,506', '300,470 350,455 352,460 305,476', '370,450 430,440 432,445 375,455', '45,580 62,575 50,610 38,612', '545,100 560,100 556,130 548,130']
  .forEach(s => water('isle', s, .4));
['620,1750 665,1755 715,1785 700,1792 640,1765', '310,1930 350,1895 356,1905 320,1940', '455,2000 500,1970 530,1965 520,1980 480,2008', '385,2090 420,2080 450,2060 475,2080 460,2095 400,2098', '855,1925 880,1900 905,1905 895,1935', '830,1990 850,1970 845,2020', '845,2190 855,2150 875,2130 855,2195', '735,2015 760,2005 745,2025', '1080,500 1110,510 1125,535 1095,525', '1090,1710 1103,1705 1100,1720', '830,2050 845,2050 838,2070', '560,2100 570,2095 566,2130', '1065,1870 1085,1865 1075,1880', '310,2220 325,2200 322,2225', '250,2300 268,2292 262,2310', '195,2140 200,2140 198,2165', '900,1880 912,1875 908,1890', '380,2185 395,2175 390,2190', '985,1890 1040,1875 1010,1895', '425,1750 440,1740 430,1760']
  .forEach(s => water('lake', s, .7));

const border = (s, cls = '', a = .3) => add($('borders'), 'path', { class: cls, d: rough(poly(s), a, 3) });
border('15,540 60,490 130,465 215,455 260,445 320,415 445,388', '', .08);
border('445,388 420,360 418,330 435,305 460,292 508,303 480,240 480,190 495,130 545,130 560,160 640,190 670,190 720,185 790,230 850,265 900,250 985,305 1050,305 1090,240 1160,190 1240,180 1275,200', '', .08);
border('785,195 805,225 860,240 880,210 950,250 1000,275 1050,278 1080,220 1130,190 1155,150 1155,120 1130,108', '', .08);
border('410,350 405,380 425,382 410,350', '', 0);
border('1272,112 1210,118 1155,120', '', .05);
border('260,445 270,480 340,520 380,580 370,660 355,690 310,700 320,730 360,740 355,775 310,830 270,875 240,880 205,890 240,940 240,1010 200,1020 180,1060 165,1100 225,1110 245,1150 265,1190 235,1240 240,1280 280,1335 265,1380 190,1380 140,1375 90,1330 50,1310 55,1240 15,1275');
border('190,1380 190,1280 235,1240');
border('265,1380 300,1420 320,1445 400,1470 450,1475 520,1490 490,1530 460,1570 455,1600 430,1690 420,1770');
border('15,960 70,955 110,990 140,995 190,1020');
border('1272,1115 1200,1150 1130,1180 1080,1230 1045,1205 1060,1240 1105,1290 1090,1330 1120,1380 1180,1420 1230,1480 1272,1500');
border('1272,1575 1225,1590 1220,1630 1140,1670 1160,1710 1175,1790 1120,1760 1065,1745 1000,1775 930,1800 880,1805 825,1775 790,1830 725,1775 710,1800 690,1860 720,1900 790,1920 825,1900 870,1935 910,1910 950,1895 1060,1870 1060,1910 1130,1960 1272,1980');
border('420,1770 340,1795 350,1825 275,1910 270,1960 230,1990 235,2050 210,2060 250,2010 320,2005 330,2080 370,2115 460,2100 510,2050 540,2000 570,2050 610,2100 640,2070 665,1990 700,2030 760,2010 780,2040 770,1970 825,1980 825,1900');
border('420,1770 500,1785 545,1770 550,1735 600,1745 650,1760 725,1775');
border('370,2115 330,2150 370,2200 365,2240 305,2260 350,2330 355,2365');
border('1272,1990 1225,2030 1250,2080 1240,2130 1272,2150');
border('1150,2364 1150,2220 1205,2190 1215,2330 1230,2364', '', .03);
['445,380 540,380 580,415 640,412 690,470 740,515 850,525 890,500 880,450 855,420', '850,525 900,560 980,600 1010,570 1080,560 1190,570 1272,520', '980,600 900,640 865,650 880,720 840,800 850,850', '865,650 1000,630 1060,670 1060,760 1100,830 1190,870 1190,940 1130,910', '640,720 600,760 560,735 500,760 480,830 550,830', '690,850 680,950 710,990 780,1040 760,1080 700,1110 720,1180 640,1230', '710,990 800,950 900,940 950,990 1060,1040 1100,1080 1020,1190', '770,1160 840,1200 880,1220 940,1180 1010,1190', '265,1200 340,1190 450,1110 500,1060 540,1020', '500,1130 500,1200 460,1260', '640,1380 700,1330 770,1390 790,1500 820,1580 790,1620', '545,1400 640,1380', '265,1380 340,1360 400,1400 400,1460', '820,2070 930,2160 980,2090 1060,2060 1090,1980', '610,2100 640,2200 570,2270 560,2350', '980,380 860,480', '350,1820 230,1690 110,1705 15,1670', '570,120 575,240', '1100,1280 1200,1260 1272,1290', '550,560 575,590 620,590', '15,2040 90,2000 140,2030 200,2040', '750,2270 860,2290 1000,2320 1080,2330']
  .forEach(s => border(s, 'state', .5));

/* class, label, x0, x1, baseline, dot x, dot y */
const labels = [
  ['r','Schleswig-',622,762,324],['r','Holstein',638,745,359],['r','Mecklenburg-',1028,1210,369],['r','Vorpommern',1032,1207,404],
  ['s','Lübeck',803,902,405,852,417],['L','Hamburg',680,839,475,759,489],['s','Bremerhaven',471,661,522,567,489],['L','Groningen',201,380,551,291,567],['s','Oldenburg',352,503,594,516,584],['L','Bremen',530,662,639,597,597],['s','Assen',248,330,649,291,615],['r','Niedersachsen',520,712,698],['s','Zwolle',180,271,714,225,726],['s','arlem',12,88,740,27,753],['L','Berlin',1174,1270,706,1220,722],['s','Wolfsburg',794,938,734,867,747],['s','Osnabrück',416,568,767,492,780],['c','Nederland',58,245,792],['L','Hannover',642,804,796,723,756],['s','Potsdam',1115,1238,785,1176,750],
  ['L','aag',10,64,865],['s','Arnhem',144,256,876,201,842],['s','Münster',305,420,860,435,849],['s','Bielefeld',499,619,870,558,834],['r','Sachsen-',913,1029,833],['r','Anhalt',928,1014,868],['s','-Hertogenbosch',15,241,943,117,908],['r','Nordrhein-',356,498,957],['r','Westfalen',364,492,992],['s','Kassel',589,677,1001,690,990],['c','Deutschland',728,953,996],['L','Leipzig',1025,1141,970,1083,984],['L','Düsseldorf',229,411,1052,318,1011],['s','Siegen',442,536,1074,488,1086],['s','Aachen',172,277,1095,225,1107],['s','Bonn',327,400,1104,363,1116],['r','Thüringen',874,1006,1085],['r','Sachse',1186,1272,1085],['s','Chemnitz',1093,1225,1130,1158,1095],['c','lgië /',18,106,1128],['c','gique /',12,131,1173],['c','lgien',20,107,1218],['s','Koblenz',375,487,1186,432,1197],['r','Hessen',587,680,1168],['r','Severo',1187,1272,1183],['L','Frankfurt am',470,689,1291,579,1250],['L','Main',538,620,1337],['c','Lëtzebuerg',123,325,1326],['s','Würzburg',762,901,1330,750,1317],['s','Plzeň',1183,1257,1360,1221,1326],['s','Mannheim',475,625,1414,549,1383],['L','Nürnberg',825,989,1431,906,1388],['s','Saarbrücken',261,437,1470,348,1434],['s','Karlsruhe',474,609,1515,540,1482],['r','Grand Est',121,249,1533],['r','Baden-Württemberg',499,769,1562],['r','Bayern',982,1074,1507],['s','Ingolstadt',798,941,1544,954,1533],['r','Jiho',1230,1274,1428],['r','en',12,42,1049],
  ['s','Augsburg',813,949,1603,882,1615],['s','Freiburg',406,523,1642],['s','im Breisgau',382,549,1678,465,1692],['s','Ulm',731,786,1642,759,1608],['r','Oberöste',1156,1272,1675],['L','München',895,1052,1704,975,1662],['s','Salzburg',1114,1235,1765,1176,1731],['s','Belfort',223,318,1773,330,1764],['s','Basel',393,466,1767,429,1778],['s','Zürich',516,604,1803,561,1818],['r','ourgogne-',12,146,1809],['r','Franche-',14,125,1844],['r','Comté',27,111,1880],['s','Besançon',229,365,1855,216,1845],['r','Tirol',890,948,1850],['c','Schweiz/',469,624,1897],['c','Suisse/Svizzera/',402,692,1942],['c','Svizra',496,600,1986],['s','Lausanne',231,367,1975,300,1986],['s','Genève',181,285,2038,234,2052],['r','Trentino-',869,984,1988],['r','Alto Adige/',855,998,2023],['r','Südtirol',876,978,2059],['r','Kä',1245,1274,1950],['s','Verbania',500,624,2091,561,2103],['s','Annecy',244,345,2123,231,2109],['s','eurbanne',12,150,2122,60,2136],['r','Lombardia',644,788,2166],['r','Veneto',1001,1089,2150],['s','Udine',1160,1242,2112,1200,2078],['r','vergne-',14,113,2186],['r','ne-Alpes',16,127,2222],['s','Chambéry',215,359,2187,201,2175],['s','Novara',520,619,2187,570,2199],['L','Trie',1220,1273,2200],['r','Piemonte',401,523,2242],['s','Verona',845,943,2232,894,2198],['L','Venezia',1013,1141,2241,1076,2199],['s','Piacenza',657,778,2263,717,2274],['s','Grenoble',112,242,2283,177,2250],['s','Alessandria',489,651,2337,570,2301]
];
const city = {};
for (const [cls, t, x0, x1, y, cx, cy] of labels) {
  add($('labels'), 'text', { class: cls, x: x0, y, textLength: x1 - x0, lengthAdjust: cls === 'c' ? 'spacing' : 'spacingAndGlyphs' }, t);
  if (cx) { city[t] = [cx, cy]; add($('labels'), 'circle', { cx, cy, r: cls === 'L' ? 8 : 5.5 }); }
}

const road = (pts, cls = '', a = .22) => add($('roads'), 'path', { class: cls, d: rough(pts, a, 3) });
const at = s => city[s] || s.split(',').map(Number);
`Hamburg|Lübeck|980,410|1070,420|1220,490|1272,490
Lübeck|850,330|905,280
Hamburg|760,300|690,250|672,110
Hamburg|660,400|600,340
Hamburg|680,550|Bremen|Oldenburg|430,560|380,540|Groningen
Bremen|Bremerhaven|585,420
Hamburg|770,590|715,660|Hannover
Hamburg|900,510|1000,540|1100,590|1160,670|1220,722
960,410|960,520|980,570
1070,420|1090,500|1100,590
Hannover|Wolfsburg|990,760|1110,770|Berlin
Hannover|Bielefeld|440,900|330,950|Düsseldorf
Bremen|520,690|Osnabrück|430,849|370,930|330,950
Osnabrück|320,775|200,800|Arnhem|90,830|15,820
Groningen|Assen|Zwolle|Arnhem|-Hertogenbosch|15,900
Groningen|170,570|130,600|160,660|Zwolle|140,770|15,770
Hannover|770,850|740,930|Kassel|600,940|480,930|330,950
Wolfsburg|850,860|980,880|1060,920|Leipzig|1060,830|1100,770
Leipzig|1040,1050|1020,1180|940,1280|Nürnberg|930,1500|Ingolstadt|960,1600|München
Kassel|760,970|920,960|Leipzig
Kassel|700,1090|720,1180|640,1240|Frankfurt am
Kassel|640,1060|590,1130|Frankfurt am|Mannheim|Karlsruhe|460,1580|430,1690|Basel
Düsseldorf|Bonn|Koblenz|500,1300|Mannheim
Düsseldorf|400,1050|Siegen|560,1140|Frankfurt am
Aachen|Düsseldorf|240,930|Arnhem
Aachen|150,1130|100,1070|15,1060
15,960|100,960|190,1000|240,1040|Düsseldorf
Aachen|160,1180|190,1300|220,1390|240,1500|230,1600
220,1390|Saarbrücken|400,1380|Mannheim
Saarbrücken|360,1530|430,1540|460,1580
Frankfurt am|680,1290|Würzburg|Nürnberg
720,1180|770,1270|920,1270|1000,1260
Nürnberg|1060,1360|1200,1330|Plzeň|1272,1330
Nürnberg|820,1440|700,1440|570,1430|Mannheim
Würzburg|680,1420|620,1520|Karlsruhe
Würzburg|790,1440|785,1560|Ulm|780,1690|720,1770
Karlsruhe|640,1530|700,1580|Ulm|Augsburg|München
München|1080,1730|Salzburg|1272,1600
Ulm|600,1620|570,1740|Zürich
München|980,1500|1050,1480|1200,1560|1272,1590
1020,1180|1045,1100|Chemnitz|1272,1050
Leipzig|1140,990|1272,900
Chemnitz|1090,1040|Leipzig
Basel|Zürich|640,1790|720,1770|690,1880
Basel|400,1860|300,1940|Lausanne|Genève|Annecy|Chambéry|Grenoble|180,2360
Lausanne|400,1930|460,1860|Zürich
Basel|Belfort|Besançon|130,1870|40,1960
130,1870|150,1970|60,2060|60,2136|Chambéry
60,2136|60,2260|110,2364
180,1600|105,1710|130,1870
15,1600|105,1700|240,1600
Zürich|570,1930|630,2060|630,2180
Novara|680,2160|850,2195|Verona|950,2230|Venezia
Novara|450,2150|360,2110
Novara|600,2260|Alessandria
630,2180|Piacenza|850,2320|900,2364
Verona|910,2080|900,1990|960,1880|1020,1810
Verona|880,2280|910,2364
Venezia|1110,2160|Udine|1180,2050
Venezia|960,2150|1020,2260|1000,2364
720,1770|800,1840|960,1830|1060,1780|1080,1730
960,1880|1040,1900|1170,1920|1272,2000
Novara|440,2220|380,2260|460,2320|460,2364
Alessandria|660,2350|700,2364
Saarbrücken|240,1450|120,1450|15,1475
240,1500|370,1560|380,1640
15,1330|90,1330|190,1390
Wolfsburg|790,900|740,930
Nürnberg|890,1290|860,1120|1000,1090
700,1090|780,1060|860,1120
1272,760|1220,722|1230,600|1272,560
Berlin|1190,860|1170,1000|Chemnitz
Siegen|420,1000|318,1011
Mannheim|530,1440|520,1480
760,300|790,400|Lübeck
Würzburg|800,1250|850,1140`.split('\n').forEach(l => road(l.split('|').map(at)));

// Secondary roads join neighbouring places.
const dots = Object.values(city);
for (let i = 0; i < dots.length; i++)
  for (let j = i + 1; j < dots.length; j++)
    if (Math.hypot(dots[i][0] - dots[j][0], dots[i][1] - dots[j][1]) < 210) road([dots[i], dots[j]], 'minor', .45);
for (const [x, y, n, r] of [[318,1000,14,80],[90,860,12,100],[560,1340,8,80],[560,1820,6,120],[70,780,8,70],[640,2190,8,60],[759,500,8,50],[180,1120,8,80],[1090,960,6,90],[600,600,6,60],[220,620,7,80],[430,1830,6,80]])
  for (let i = 0; i < n; i++) {
    const a = rnd() * 6.3, b = a + 1.5 + rnd() * 2;
    road([[x + Math.cos(a) * r, y + Math.sin(a) * r], [x + rnd() * 60 - 30, y + rnd() * 60 - 30], [x + Math.cos(b) * r, y + Math.sin(b) * r]], i % 2 ? 'minor' : '', .4);
  }
```
